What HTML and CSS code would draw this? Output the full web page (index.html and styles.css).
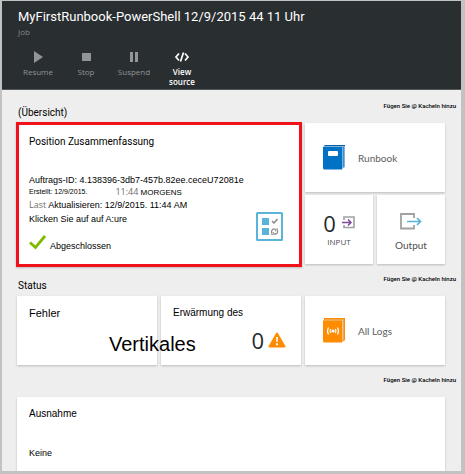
FILE: index.html
```html
<!DOCTYPE html>
<html lang="de">
<head>
<meta charset="utf-8">
<meta name="viewport" content="width=device-width, initial-scale=1">
<title>MyFirstRunbook-PowerShell</title>
<link rel="stylesheet" href="styles.css">
</head>
<body>
<div class="blade">
  <header class="header">
    <h1 class="title">MyFirstRunbook-PowerShell 12/9/2015 44 11 Uhr</h1>
    <p class="subtitle">Job</p>
    <nav class="toolbar">
      <button class="tool" type="button" disabled>
        <svg width="16" height="16" viewBox="0 0 16 16"><path d="M4 2l9 6-9 6z" fill="currentColor"/></svg>
        <span>Resume</span>
      </button>
      <button class="tool" type="button" disabled>
        <svg width="16" height="16" viewBox="0 0 16 16"><path d="M4 4h9v8H4z" fill="currentColor"/></svg>
        <span>Stop</span>
      </button>
      <button class="tool" type="button" disabled>
        <svg width="16" height="16" viewBox="0 0 16 16"><path d="M4 3h3v10H4zM9 3h3v10H9z" fill="currentColor"/></svg>
        <span>Suspend</span>
      </button>
      <button class="tool tool-active" type="button">
        <svg width="16" height="16" viewBox="0 0 16 16"><path d="M5 4.500L2 8l3 3.500M11 4.500L14 8l-3 3.500M9.500 3.500l-3 9" fill="none" stroke="currentColor" stroke-width="1.700"/></svg>
        <span>View source</span>
      </button>
    </nav>
  </header>
  <main class="content">
    <section class="section">
      <div class="section-head">
        <h2 class="section-title">(Übersicht)</h2>
        <a class="add" href="#">Fügen Sie @ Kacheln hinzu</a>
      </div>
      <div class="tiles">
        <article class="tile summary">
          <h3 class="tile-title">Position Zusammenfassung</h3>
          <div class="details">
            <p class="text">Auftrags-ID: 4.138396-3db7-457b.82ee.ceceU72081e</p>
            <p class="created"><span>Erstellt: 12/9/2015.</span><span><span class="muted">11:44</span> MORGENS</span></p>
            <p class="text"><span class="muted">Last</span> Aktualisieren: 12/9/2015. 11:44 AM</p>
            <p class="text">Klicken Sie auf auf A:ure</p>
          </div>
          <p class="done">
            <svg width="17" height="15" viewBox="0 0 17 15"><path d="M1 7.500l5.500 5L16 1" fill="none" stroke="#7fba00" stroke-width="2.800"/></svg>
            <span class="text">Abgeschlossen</span>
          </p>
          <svg class="job-icon" width="27" height="29" viewBox="0 0 27 29">
            <rect x="1" y="1" width="25" height="27" rx="0.500" fill="#fff" stroke="#59b4d9" stroke-width="2"/>
            <path d="M6 6h7v7H6zM6 16h7v7H6z" fill="#59b4d9"/>
            <path d="M16 9l2 2 3.500-4" fill="none" stroke="#888" stroke-width="1.500"/>
            <path d="M16.300 21.500a2.600 2.600 0 0 1 1-4.300h1.700M20.700 17.500a2.600 2.600 0 0 1-1 4.500h-1.500" fill="none" stroke="#888" stroke-width="1.300"/>
            <path d="M15 22.500h2.500V20M22 17h-2.500v2.500" fill="none" stroke="#888" stroke-width="0.800"/>
          </svg>
        </article>
        <a class="tile link-tile" href="#">
          <svg width="22" height="25" viewBox="0 0 22 25">
            <path d="M2 0h20v22l-3 2V3H1z" fill="#7fb2dc"/><path d="M0 1.500L2 0h20v1H3z" fill="#0f5fa8"/>
            <path d="M0 2h19v22.500H1.500Q0 24.500 0 23z" fill="#0072c6"/><path d="M20 2h1v20h-1z" fill="#3f8fcf"/>
            <rect x="5" y="6" width="10" height="5" rx="1" fill="#fff"/>
          </svg>
          <span>Runbook</span>
        </a>
        <a class="tile small-tile" href="#">
          <span class="metric"><span class="zero">0</span>
            <svg width="13" height="13" viewBox="0 0 13 13"><path d="M2 4V1h10v10.500H2V9" fill="none" stroke="#a0a1a2" stroke-width="1.600"/><path d="M0 6.500h8M6 3.500l3 3-3 3" fill="none" stroke="#804998" stroke-width="1.500"/></svg>
          </span>
          <span class="caption">INPUT</span>
        </a>
        <a class="tile small-tile output" href="#">
          <svg width="22" height="17" viewBox="0 0 22 17"><path d="M14 5V1H1v14.500h13V12" fill="none" stroke="#a0a1a2" stroke-width="1.800"/><path d="M7 8.500h13M17 5l3.500 3.500L17 12" fill="none" stroke="#59b4d9" stroke-width="1.700"/></svg>
          <span>Output</span>
        </a>
      </div>
    </section>
    <section class="section">
      <div class="section-head">
        <h2 class="section-title">Status</h2>
        <a class="add" href="#">Fügen Sie @ Kacheln hinzu</a>
      </div>
      <div class="tiles">
        <article class="tile stat">
          <h3 class="tile-title">Fehler</h3>
          <span class="vertical">Vertikales</span>
        </article>
        <article class="tile stat">
          <h3 class="tile-title small">Erwärmung des</h3>
          <p class="warning"><span class="zero">0</span>
            <svg width="18" height="16" viewBox="0 0 18 16"><path d="M9 1.500L16.500 14.500h-15z" fill="#ff8c00" stroke="#ff8c00" stroke-width="2" stroke-linejoin="round"/><path d="M8 5h2l-.4 5H8.400zM8 11.200h2v2H8z" fill="#fff"/></svg>
          </p>
        </article>
        <a class="tile link-tile" href="#">
          <svg width="22" height="25" viewBox="0 0 22 25">
            <path d="M1 0h21v22l-3 2V3H1z" fill="#ff8c00"/><path d="M2 1.500h18.500V22l-1.500 1V3H1z" fill="#e2c49c"/>
            <path d="M0 2.500h19v22H1.500Q0 24.500 0 23z" fill="#ff8c00"/>
            <circle cx="10" cy="13" r="1.600" fill="#fff"/>
            <path d="M7.700 11q-1.500 2 0 4M12.300 11q1.500 2 0 4M5.500 9.500q-2 3.500 0 7M14.500 9.500q2 3.500 0 7" fill="none" stroke="#fff" stroke-width="1.200"/>
          </svg>
          <span>All Logs</span>
        </a>
      </div>
    </section>
    <section class="section last">
      <div class="section-head">
        <a class="add" href="#">Fügen Sie @ Kacheln hinzu</a>
      </div>
      <article class="tile exception">
        <h3 class="tile-title small">Ausnahme</h3>
        <p class="text">Keine</p>
      </article>
    </section>
  </main>
</div>
</body>
</html>
```
FILE: styles.css
```css
* {
  box-sizing: border-box;
}

body {
  margin: 0;
  font-family: "Liberation Sans", Arial, sans-serif;
  color: #000;
}

h1, h2, h3, p {
  margin: 0;
  font-weight: 400;
}

a {
  color: inherit;
  text-decoration: none;
}

svg {
  display: block;
  flex: none;
}

.blade {
  display: flex;
  flex-direction: column;
  height: 100vh;
  overflow: hidden;
  border: solid #c2c2c2;
  border-width: 1px 4px 3px 2px;
  background: #eee;
}

.header {
  flex: none;
  padding: 7px 16px 2px;
  background: #292e31;
  border-bottom: 1px solid #55585a;
}

.title {
  font-family: Roboto, sans-serif;
  font-size: 13px;
  line-height: 18px;
  color: #fff;
}

.subtitle {
  font-family: "Open Sans", sans-serif;
  font-size: 8px;
  line-height: 12px;
  color: #85888a;
}

.toolbar {
  display: flex;
  margin: 11px 0 0 -4px;
}

.tool {
  display: flex;
  flex-direction: column;
  align-items: center;
  gap: 1px;
  width: 48px;
  padding: 0 8px;
  border: 0;
  background: none;
  font-family: "Open Sans", sans-serif;
  font-size: 8px;
  line-height: 10px;
  color: #929496;
}

.tool-active {
  color: #fff;
  font-weight: 600;
}

.tool span {
  padding-top: 1px;
}

.content {
  flex: 1;
  min-height: 0;
  display: flex;
  flex-direction: column;
  padding: 1px 16px 0 15px;
}

.section-head {
  display: flex;
  justify-content: space-between;
  align-items: flex-start;
  height: 32px;
  padding: 11px 0 0 1px;
  margin-right: -11px;
}

.section-title {
  padding-top: 4px;
  font-family: Roboto, sans-serif;
  font-size: 10px;
  line-height: 14px;
}

.add {
  margin-left: auto;
  font-family: Roboto, sans-serif;
  font-size: 6px;
  font-weight: 500;
  line-height: 8px;
}

.tiles {
  display: grid;
  grid-template-columns: repeat(6, 1fr);
  grid-auto-rows: 69px;
  gap: 3px 4px;
}

.tile {
  background: #fff;
  box-shadow: 0 1px 2px #bbb;
}

.tile-title {
  font-size: 11px;
  line-height: 14px;
}

.tile-title.small {
  font-size: 10px;
}

.summary {
  position: relative;
  grid-column: span 4;
  grid-row: span 2;
  margin: -1px -1px -3px;
  padding: 10px 10px 0;
  border: 3px solid #f1111b;
}

.summary .tile-title {
  font-family: Roboto, sans-serif;
  font-size: 10px;
}

.details {
  padding-top: 24px;
}

.text {
  font-size: 9px;
  line-height: 14px;
}

.created {
  display: flex;
  gap: 28px;
  font-size: 7px;
  line-height: 10px;
}

.created > span + span {
  font-size: 8px;
}

.muted {
  font-family: "Open Sans", sans-serif;
  font-size: 9px;
  color: #6d6e70;
}

.done {
  display: flex;
  align-items: center;
  gap: 4px;
  padding-top: 5px;
}

.done .text {
  padding-top: 8px;
}

.job-icon {
  position: absolute;
  right: 16px;
  bottom: 23px;
}

.link-tile {
  grid-column: span 2;
  display: flex;
  align-items: center;
  gap: 13px;
  padding-left: 18px;
  font-family: Lato, sans-serif;
  font-size: 10px;
  color: #5c5e60;
}

.small-tile {
  display: flex;
  flex-direction: column;
  align-items: center;
  justify-content: center;
  font-family: Lato, sans-serif;
  font-size: 10px;
  line-height: 14px;
  color: #4d4f51;
}

.output {
  gap: 8px;
  padding-top: 6px;
}

.metric {
  display: flex;
  align-items: center;
  gap: 6px;
}

.zero {
  font-family: "Open Sans", sans-serif;
  font-size: 22px;
  font-weight: 500;
  line-height: 24px;
  color: #24292d;
}

.caption {
  font-family: "Open Sans", sans-serif;
  font-size: 8px;
  font-weight: 500;
}

.stat {
  position: relative;
  grid-column: span 2;
  padding: 10px 12px;
}

.vertical {
  position: absolute;
  z-index: 1;
  left: 92px;
  bottom: 10px;
  font-size: 20px;
  line-height: 22px;
}

.warning {
  display: flex;
  justify-content: flex-end;
  align-items: center;
  gap: 4px;
  padding: 8px 3px 0 0;
}

.last {
  flex: 1;
  display: flex;
  flex-direction: column;
}

.last .section-head {
  flex: none;
}

.exception {
  flex: 1;
  display: flex;
  flex-direction: column;
  gap: 25px;
  padding: 10px 12px;
}
```
